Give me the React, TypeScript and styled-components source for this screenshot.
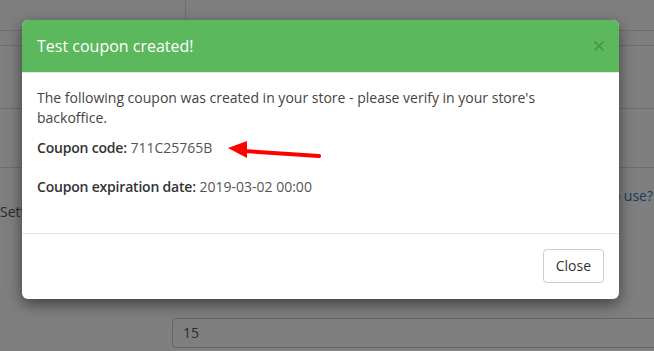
import React from "react";
import styled, { createGlobalStyle } from "styled-components";

const Global = createGlobalStyle`
  html, body { margin: 0; padding: 0; }
  body {
    width: 654px;
    height: 351px;
    overflow: hidden;
    background: #fff;
    font-family: "Open Sans", "Liberation Sans", sans-serif;
    font-size: 14px;
    line-height: 20px;
    color: #333;
  }
  * { box-sizing: border-box; }
`;

const Page = styled.div`
  position: relative;
  width: 654px;
  height: 351px;
  overflow: hidden;
`;

const TableRow = styled.div<{ $h: number }>`
  height: ${(p) => p.$h}px;
  border-bottom: 1px solid #ddd;
  display: grid;
  grid-template-columns: 186px 1fr;
`;

const Cell = styled.div<{ $divider?: boolean }>`
  border-right: ${(p) => (p.$divider ? "1px solid #ddd" : "none")};
`;

const FormRow = styled.div`
  display: flex;
  justify-content: space-between;
  align-items: flex-start;
  margin-top: 18px;
  height: 50px;
`;

const Label = styled.span`
  margin-top: 16px;
  color: #555;
`;

const HelpLink = styled.a`
  color: #337ab7;
  padding-right: 1px;
  text-decoration: none;
`;

const InputRow = styled.div`
  margin-top: 82px;
  padding-left: 172px;
  margin-right: -20px;
`;

const Input = styled.div`
  height: 30px;
  border: 1px solid #ccc;
  border-radius: 4px;
  padding: 4px 10px;
  color: #555;
`;

const Backdrop = styled.div`
  position: absolute;
  inset: 0;
  background: rgba(0, 0, 0, 0.5);
`;

const Modal = styled.div`
  position: absolute;
  left: 22px;
  top: 20px;
  width: 597px;
  background: #fff;
  border-radius: 6px;
  box-shadow: 0 5px 15px rgba(0, 0, 0, 0.5);
`;

const Header = styled.div`
  background: #5cb85c;
  border-radius: 6px 6px 0 0;
  border-bottom: 1px solid #e5e5e5;
  padding: 15px;
  display: flex;
  align-items: center;
  justify-content: space-between;
`;

const Title = styled.h4`
  margin: 0;
  font-size: 16px;
  line-height: 22px;
  font-weight: 400;
  color: #fff;
`;

const CloseX = styled.button`
  border: 0;
  background: none;
  padding: 0;
  width: 10px;
  height: 10px;
  display: flex;
  cursor: pointer;
`;

const Body = styled.div`
  padding: 15px;
  color: #444;
`;

const Para = styled.p<{ $mb?: number }>`
  position: relative;
  margin: 0 0 ${(p) => p.$mb ?? 10}px;
`;

const Key = styled.span`
  font-weight: 600;
  letter-spacing: -0.2px;
  color: #333;
`;

const Value = styled.span`
  color: #555;
`;

const Arrow = styled.svg`
  position: absolute;
  left: 189px;
  top: 0;
`;

const Footer = styled.div`
  border-top: 1px solid #e5e5e5;
  padding: 15px 15px 16px;
  display: flex;
  justify-content: flex-end;
`;

const Button = styled.button`
  font-family: inherit;
  font-size: 14px;
  line-height: 20px;
  padding: 6px 12px;
  border: 1px solid #ccc;
  border-radius: 4px;
  background: #fff;
  color: #333;
  cursor: pointer;
`;

export default function App() {
  return (
    <>
      <Global />
      <Page>
        <TableRow $h={31}>
          <Cell $divider />
          <Cell />
        </TableRow>
        <TableRow $h={15}>
          <Cell />
          <Cell />
        </TableRow>
        <TableRow $h={63}>
          <Cell />
          <Cell />
        </TableRow>
        <TableRow $h={59}>
          <Cell />
          <Cell />
        </TableRow>
        <FormRow>
          <Label>Settings</Label>
          <HelpLink href="#">How to use?</HelpLink>
        </FormRow>
        <InputRow>
          <Input>15</Input>
        </InputRow>
        <Backdrop />
        <Modal>
          <Header>
            <Title>Test coupon created!</Title>
            <CloseX aria-label="Close">
              <svg width="10" height="10" viewBox="0 0 10 10">
                <path
                  d="M0.5 0.5 L9.5 9.5 M9.5 0.5 L0.5 9.5"
                  stroke="rgba(0,0,0,0.2)"
                  strokeWidth="1.6"
                />
              </svg>
            </CloseX>
          </Header>
          <Body>
            <Para>
              The following coupon was created in your store - please verify in your store's
              backoffice.
            </Para>
            <Para $mb={19}>
              <Key>Coupon code:</Key> <Value>711C25765B</Value>
              <Arrow width="96" height="24" viewBox="0 0 96 24">
                <line x1="18" y1="13" x2="93" y2="18" stroke="#f00" strokeWidth="4" strokeLinecap="round" />
                <polygon points="2,10 21,3 21,20" fill="#f00" />
              </Arrow>
            </Para>
            <Para $mb={21}>
              <Key>Coupon expiration date:</Key> <Value>2019-03-02 00:00</Value>
            </Para>
          </Body>
          <Footer>
            <Button>Close</Button>
          </Footer>
        </Modal>
      </Page>
    </>
  );
}
